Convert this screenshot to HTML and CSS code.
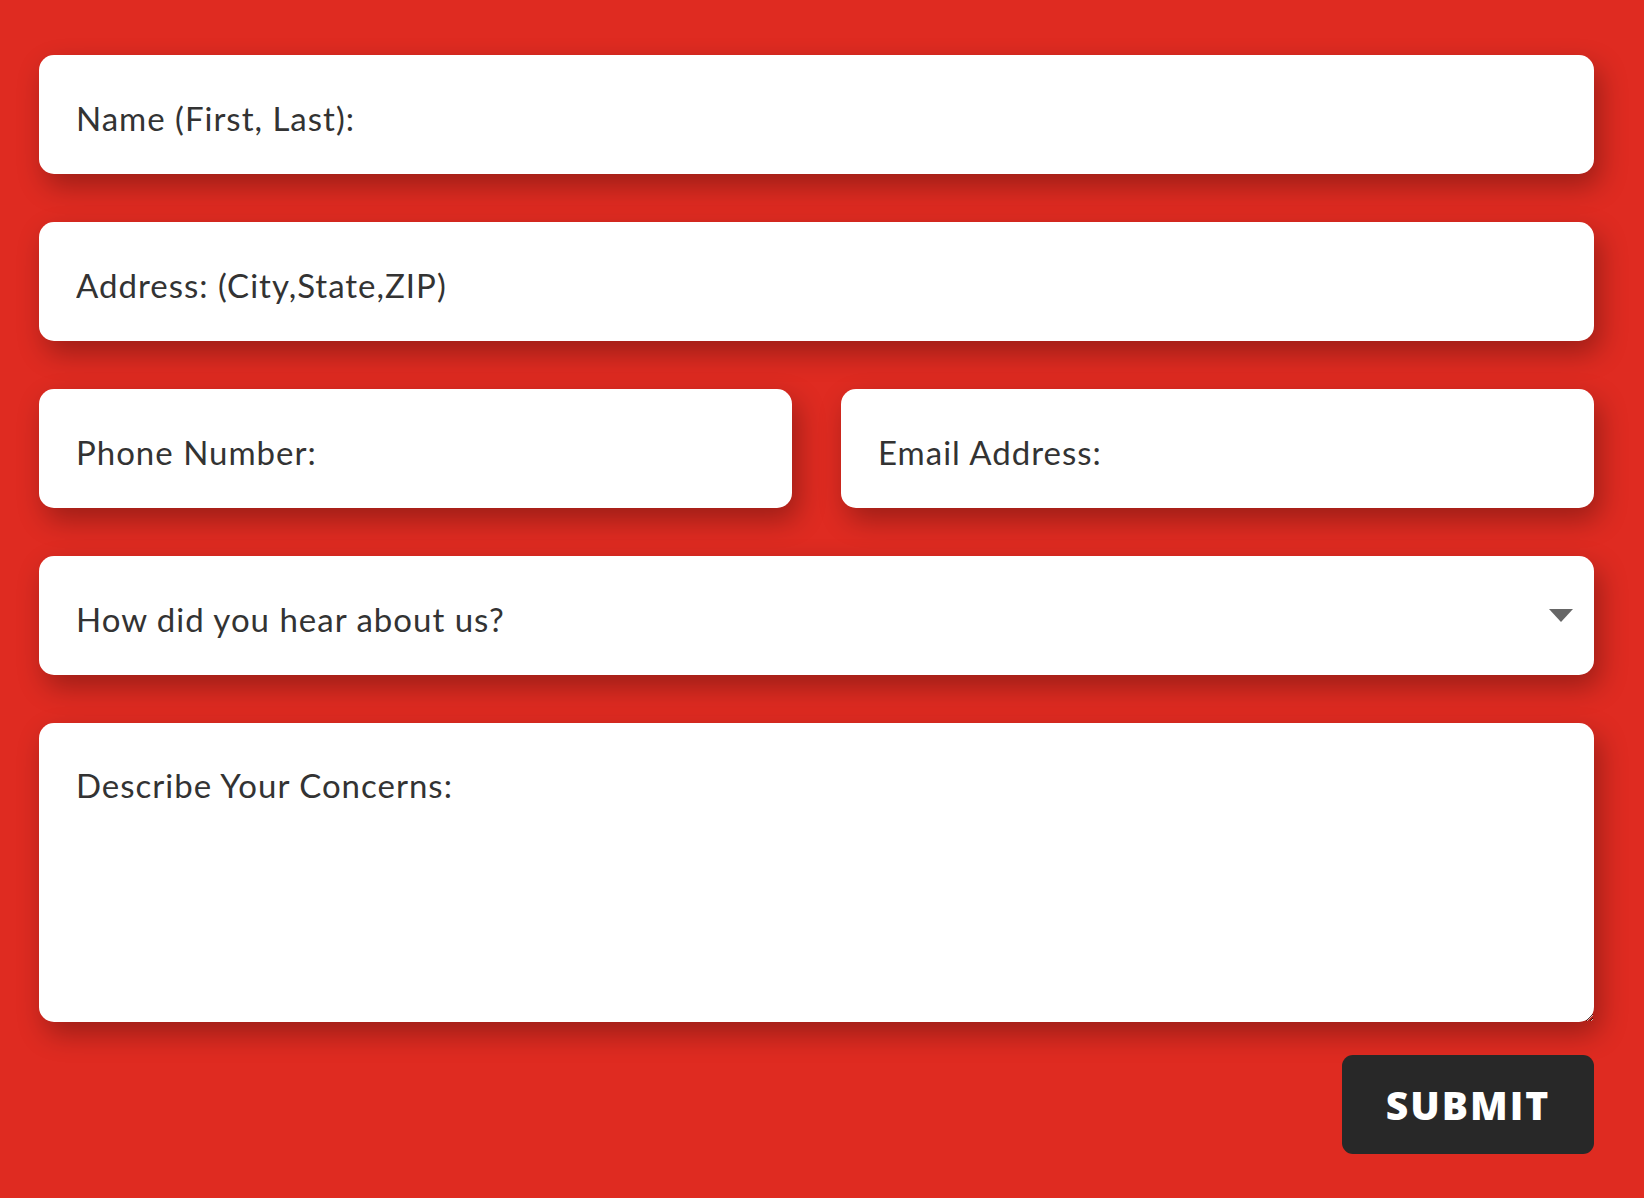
FILE: index.html
```html
<!DOCTYPE html>
<html lang="en">
<head>
<meta charset="utf-8">
<title>Contact Form</title>
<link rel="stylesheet" href="styles.css">
</head>
<body>
<form class="contact-form">
  <input class="field" type="text" placeholder="Name (First, Last):">
  <input class="field" type="text" placeholder="Address: (City,State,ZIP)">
  <div class="row">
    <input class="field" type="tel" placeholder="Phone Number:">
    <input class="field" type="email" placeholder="Email Address:">
  </div>
  <div class="select-wrap">
    <select class="field select">
      <option>How did you hear about us?</option>
    </select>
  </div>
  <textarea class="field area" placeholder="Describe Your Concerns:"></textarea>
  <div class="actions">
    <button class="submit" type="button">SUBMIT</button>
  </div>
</form>
</body>
</html>
```
FILE: styles.css
```css
html, body {
  margin: 0;
  padding: 0;
  background: #df2b21;
  height: 100%;
}
.contact-form {
  display: flex;
  flex-direction: column;
  gap: 48px;
  padding: 55px 50px 0 39px;
}
.field {
  display: block;
  box-sizing: border-box;
  width: 100%;
  height: 119px;
  border: none;
  outline: none;
  border-radius: 15px;
  background: #fff;
  padding: 6px 35px 0 37px;
  font-family: "Lato", "Open Sans", sans-serif;
  font-size: 33px;
  letter-spacing: 1px;
  color: #333;
  box-shadow: 6px 12px 28px rgba(0, 0, 0, 0.3);
  margin: 0;
}
.field::placeholder {
  color: #333;
  opacity: 1;
}
.row {
  display: grid;
  grid-template-columns: 1fr 1fr;
  gap: 49px;
}
.select-wrap {
  position: relative;
}
.select {
  appearance: none;
  -webkit-appearance: none;
  cursor: pointer;
}
.select-wrap::after {
  content: "";
  position: absolute;
  right: 21px;
  top: 53px;
  width: 0;
  height: 0;
  border-left: 12px solid transparent;
  border-right: 12px solid transparent;
  border-top: 13px solid #666;
  pointer-events: none;
}
.area {
  height: 299px;
  padding-top: 43px;
  resize: vertical;
  line-height: 1.2;
}
.actions {
  display: flex;
  justify-content: flex-end;
  margin-top: -15px;
}
.submit {
  width: 252px;
  height: 99px;
  border: none;
  border-radius: 11px;
  background: #282828;
  color: #fff;
  font-family: "Open Sans", "Lato", sans-serif;
  font-weight: 800;
  font-size: 39px;
  letter-spacing: 2px;
  cursor: pointer;
}
```
